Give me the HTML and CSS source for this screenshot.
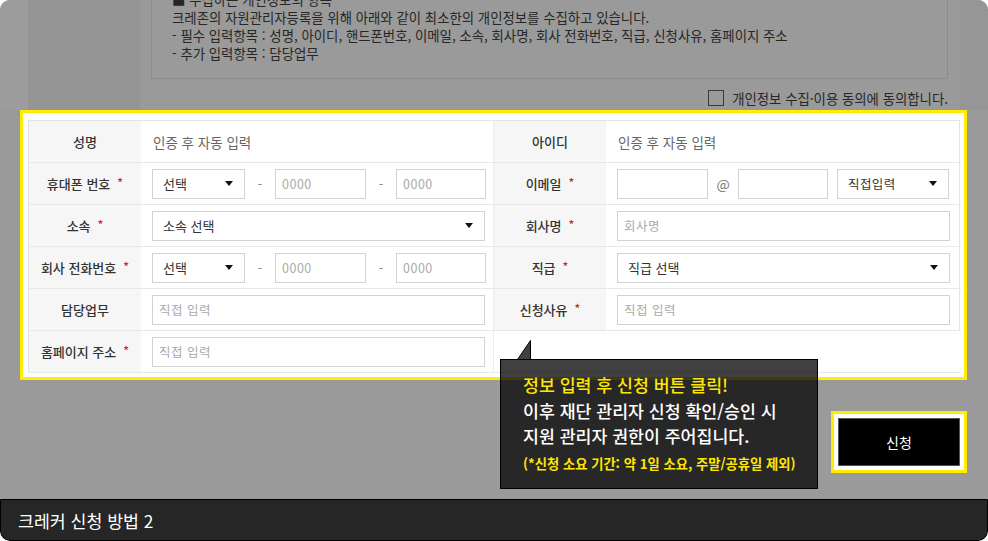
FILE: index.html
```html
<!DOCTYPE html>
<html lang="ko">
<head>
<meta charset="utf-8">
<title>크레커 신청 방법 2</title>
<link rel="stylesheet" href="styles.css">
</head>
<body>
<div class="frame">
  <div class="top">
    <div class="side-l"></div>
    <div class="thcol"></div>
    <div class="tdcol">
      <div class="terms">
        <p>■ 수집하는 개인정보의 항목</p>
        <p>크레존의 자원관리자등록을 위해 아래와 같이 최소한의 개인정보를 수집하고 있습니다.</p>
        <p>- 필수 입력항목 : 성명, 아이디, 핸드폰번호, 이메일, 소속, 회사명, 회사 전화번호, 직급, 신청사유, 홈페이지 주소</p>
        <p>- 추가 입력항목 : 담당업무</p>
      </div>
      <div class="agree"><span class="cb"></span><span>개인정보 수집·이용 동의에 동의합니다.</span></div>
    </div>
    <div class="side-r"></div>
  </div>

  <div class="hl">
    <div class="tbl">
      <div class="th">성명</div>
      <div class="td"><span class="auto">인증 후 자동 입력</span></div>
      <div class="th">아이디</div>
      <div class="td"><span class="auto">인증 후 자동 입력</span></div>

      <div class="th">휴대폰 번호<i class="req">*</i></div>
      <div class="td">
        <div class="sel w93"><span>선택</span><b class="caret"></b></div>
        <span class="sep">-</span>
        <div class="inp w91 ph">0000</div>
        <span class="sep">-</span>
        <div class="inp w90 ph">0000</div>
      </div>
      <div class="th">이메일<i class="req">*</i></div>
      <div class="td">
        <div class="inp w91"></div>
        <span class="sep at">@</span>
        <div class="inp w90"></div>
        <div class="sel w112 ml9"><span class="ls">직접입력</span><b class="caret"></b></div>
      </div>

      <div class="th">소속<i class="req">*</i></div>
      <div class="td"><div class="sel full"><span>소속 선택</span><b class="caret"></b></div></div>
      <div class="th">회사명<i class="req">*</i></div>
      <div class="td"><div class="inp full ph">회사명</div></div>

      <div class="th">회사 전화번호<i class="req">*</i></div>
      <div class="td">
        <div class="sel w93"><span>선택</span><b class="caret"></b></div>
        <span class="sep">-</span>
        <div class="inp w91 ph">0000</div>
        <span class="sep">-</span>
        <div class="inp w90 ph">0000</div>
      </div>
      <div class="th">직급<i class="req">*</i></div>
      <div class="td"><div class="sel full"><span>직급 선택</span><b class="caret"></b></div></div>

      <div class="th">담당업무</div>
      <div class="td"><div class="inp full ph">직접 입력</div></div>
      <div class="th">신청사유<i class="req">*</i></div>
      <div class="td"><div class="inp full ph">직접 입력</div></div>

      <div class="th last">홈페이지 주소<i class="req">*</i></div>
      <div class="td last"><div class="inp full ph">직접 입력</div></div>
      <div class="empty last"></div>
    </div>
  </div>

  <div class="btnrow">
    <div class="btnhl"><div class="btn">신청</div></div>
  </div>

  <div class="bar">크레커 신청 방법 2</div>

  <div class="tip">
    <svg class="tip-arrow" width="15" height="20" viewBox="0 0 15 20"><polygon points="0.5,19.5 13.5,0.5 13.5,19.5" fill="rgba(0,0,0,0.75)" stroke="#000" stroke-width="1"/></svg>
    <p class="t1">정보 입력 후 신청 버튼 클릭!</p>
    <p class="t2">이후 재단 관리자 신청 확인/승인 시</p>
    <p class="t2">지원 관리자 권한이 주어집니다.</p>
    <p class="t3">(*신청 소요 기간: 약 1일 소요, 주말/공휴일 제외)</p>
  </div>
</div>
</body>
</html>
```

FILE: styles.css
```css
* { box-sizing: border-box; }
html, body { margin: 0; padding: 0; background: #fff; }
body { font-family: "Noto Sans CJK KR", "Noto Sans", sans-serif; }
p { margin: 0; }

.frame {
  position: relative;
  width: 988px;
  height: 541px;
  border-radius: 10px;
  overflow: hidden;
  background: #9a9a9a;
  display: flex;
  flex-direction: column;
}

/* dimmed top area */
.top { height: 110px; display: flex; flex: none; overflow: hidden; }
.side-l { width: 28px; background: #9c9c9c; }
.thcol { width: 112px; background: #959595; }
.tdcol { width: 820px; background: #9a9a9a; }
.side-r { width: 28px; background: #969696; }

.terms {
  margin: -21px 12px 0 11px;
  border: 1px solid #8b8b8b;
  padding: 10px 0 16px 20px;
  font-size: 13.4px;
  line-height: 18px;
  color: #262626;
}
.agree {
  margin: 9px 12px 0 0;
  height: 20px;
  display: flex;
  justify-content: flex-end;
  align-items: center;
  gap: 8px;
  font-size: 13.4px;
  color: #262626;
}
.cb { width: 16px; height: 16px; border: 1px solid #3a3a3a; }

/* highlighted form */
.hl {
  flex: none;
  margin-left: 20px;
  width: 947px;
  height: 270px;
  border: 3px solid #ffec00;
  background: #fff;
  padding: 7px 4px 0 5px;
}
.tbl {
  width: 932px;
  display: grid;
  grid-template-columns: 112px 353px 112px 355px;
  grid-auto-rows: 42px;
  border: 1px solid #e4e4e4;
  border-bottom: none;
}
.th, .td, .empty { border-bottom: 1px solid #e8e8e8; }
.th {
  background: #f6f6f6;
  display: flex;
  align-items: center;
  justify-content: center;
  font-size: 13px;
  font-weight: 500;
  color: #333;
}
.td {
  display: flex;
  align-items: center;
  padding: 0 8px 0 11px;
  font-size: 13px;
  color: #333;
}
.td:nth-child(4n) { padding: 0 11px; }
.tbl > .td:nth-child(4n+2) { border-right: 1px solid #ececec; }
.empty { background: #fff; grid-column: span 2; }
.req { font-style: normal; color: #d2232a; margin-left: 7px; font-size: 12px; position: relative; top: -2px; }
.auto { color: #666; font-size: 13.5px; padding-left: 1px; }

.sel, .inp {
  height: 30px;
  border: 1px solid #d2d2d2;
  background: #fff;
  display: flex;
  align-items: center;
  font-size: 13px;
  color: #333;
}
.sel { justify-content: space-between; padding: 0 11px 0 10px; }
.inp { padding: 0 6px; }
.ph { color: #aaa; font-size: 12.5px; letter-spacing: 0.5px; }
.full { width: 100%; }
.w93 { width: 93px; flex: none; }
.w91 { width: 91px; flex: none; }
.w90 { width: 90px; flex: none; }
.w112 { width: 112px; flex: none; }
.ml9 { margin-left: 9px; }
.ls { letter-spacing: 0.4px; font-size: 12.5px; }
.sep { width: 30px; flex: none; text-align: center; color: #888; font-size: 13px; }
.sep.at { color: #777; font-size: 14px; }
.caret {
  width: 0; height: 0;
  border-left: 4.5px solid transparent;
  border-right: 4.5px solid transparent;
  border-top: 5px solid #111;
}

/* submit button */
.btnrow { display: flex; justify-content: flex-end; padding-right: 21px; margin-top: 31px; flex: none; }
.btnhl { border: 3px solid #ffec00; background: #fff; padding: 4px; }
.btn {
  width: 122px; height: 48px;
  background: #000;
  border: 1px solid #555;
  color: #fff;
  font-size: 14px;
  display: flex; align-items: center; justify-content: center;
}

/* bottom caption bar */
.bar {
  margin-top: auto;
  height: 42px;
  flex: none;
  background: #262626;
  border: 1px solid #000;
  border-radius: 0 0 10px 10px;
  color: #fff;
  font-size: 17.3px;
  display: flex;
  align-items: center;
  padding-left: 17px;
}

/* tooltip */
.tip {
  position: absolute;
  left: 500px;
  top: 359px;
  width: 318px;
  height: 130px;
  background: rgba(0,0,0,0.75);
  border: 1px solid #000;
  padding: 12px 0 0 22px;
}
.tip-arrow { position: absolute; left: 16px; top: -20px; }
.t1 { color: #ffe600; font-size: 17.3px; line-height: 26px; font-weight: 500; }
.t2 { color: #fff; font-size: 17.3px; line-height: 25px; font-weight: 500; }
.t3 { color: #ffe600; font-size: 13.3px; line-height: 20px; font-weight: 700; margin-top: 6px; }
```
